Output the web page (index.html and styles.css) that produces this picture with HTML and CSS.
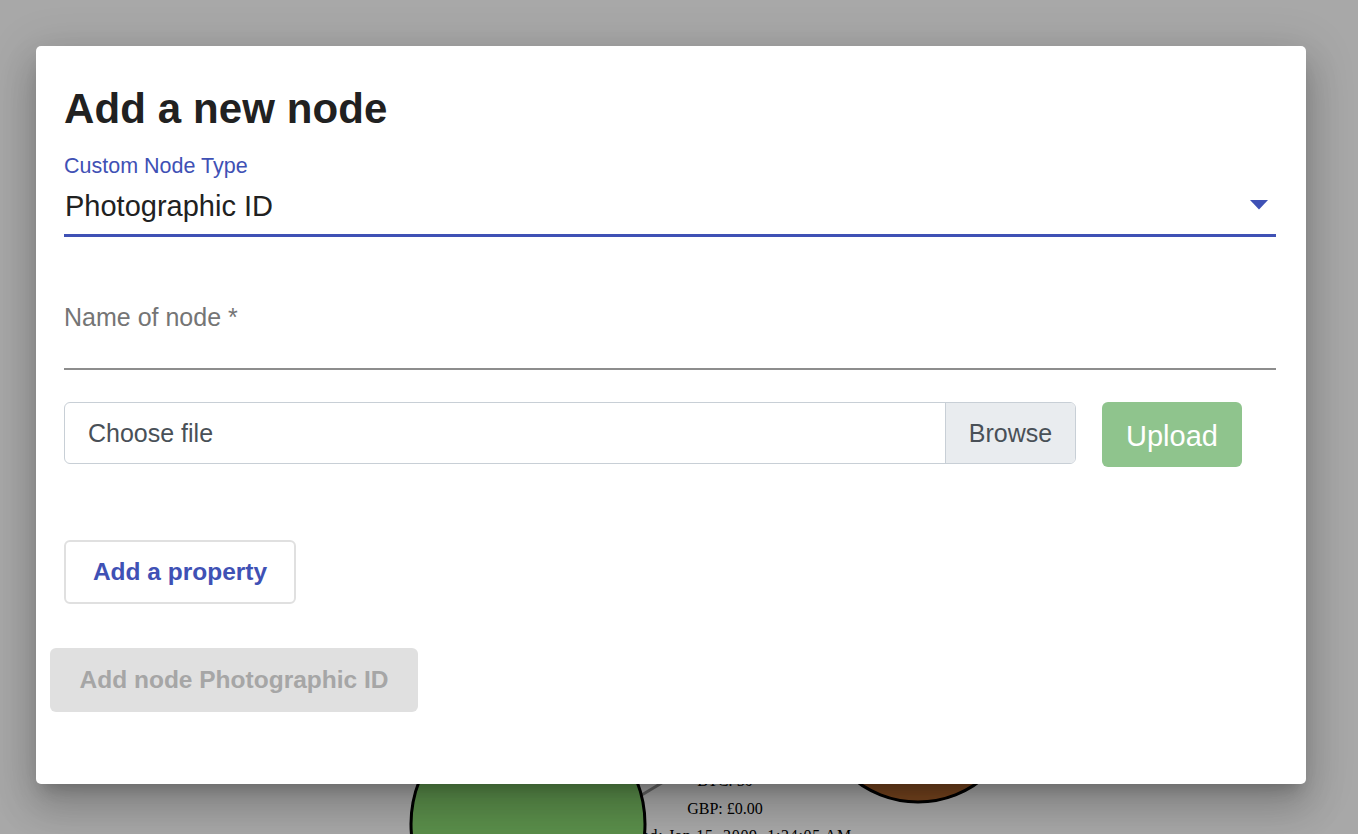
FILE: index.html
```html
<!DOCTYPE html>
<html lang="en">
<head>
<meta charset="utf-8">
<title>Add a new node</title>
<link rel="stylesheet" href="styles.css">
</head>
<body>
<div class="graph">
  <svg class="graph-svg" width="1358" height="834" viewBox="0 0 1358 834">
    <line x1="600" y1="820" x2="700" y2="760" stroke="#9a9a9a" stroke-width="3"/>
    <text x="725" y="786" class="gtext" text-anchor="middle">BTC: 50</text>
    <text x="725" y="814" class="gtext" text-anchor="middle">GBP: £0.00</text>
    <text x="852" y="841" class="gtext gtext-wide" text-anchor="end">Created: Jan 15, 2009, 1:24:05 AM</text>
    <circle cx="528" cy="824" r="117" fill="#8ada73" stroke="#000" stroke-width="3"/>
    <text x="528" y="848" class="gtext-white" text-anchor="middle">Block 0</text>
    <circle cx="918" cy="700" r="102" fill="#b5692f" stroke="#000" stroke-width="3"/>
  </svg>
</div>
<div class="backdrop"></div>
<div class="dialog-wrap">
  <div class="dialog">
    <h2 class="dialog-title">Add a new node</h2>
    <div class="field select-field">
      <label class="field-label label-focused">Custom Node Type</label>
      <div class="select-value">
        <span>Photographic ID</span>
        <svg class="select-arrow" width="18" height="10" viewBox="0 0 18 10"><path d="M0 0 L18 0 L9 9.5 Z" fill="#3f51b5"/></svg>
      </div>
    </div>
    <div class="field text-field">
      <label class="field-label label-rest">Name of node *</label>
    </div>
    <div class="file-row">
      <div class="file-input">
        <span class="file-text">Choose file</span>
        <span class="file-browse">Browse</span>
      </div>
      <button class="btn-upload">Upload</button>
    </div>
    <button class="btn-outline">Add a property</button>
    <button class="btn-disabled">Add node Photographic ID</button>
  </div>
</div>
</body>
</html>
```
FILE: styles.css
```css
html, body {
  margin: 0;
  padding: 0;
}
body {
  width: 1358px;
  height: 834px;
  overflow: hidden;
  background: #fff;
  font-family: "Liberation Sans", Arial, Helvetica, sans-serif;
  position: relative;
}
.graph {
  position: absolute;
  left: 0;
  top: 0;
}
.graph-svg {
  display: block;
}
.gtext {
  font-family: "Liberation Serif", "Times New Roman", serif;
  font-size: 16px;
  fill: #000;
}
.gtext-wide {
  letter-spacing: 0.7px;
}
.gtext-white {
  font-family: "Liberation Serif", "Times New Roman", serif;
  font-size: 22px;
  fill: #fff;
}
.backdrop {
  position: absolute;
  inset: 0;
  background: rgba(0, 0, 0, 0.34);
}
.dialog-wrap {
  position: absolute;
  left: 36px;
  top: 46px;
}
.dialog {
  width: 1270px;
  height: 738px;
  box-sizing: border-box;
  background: #fff;
  border-radius: 5px;
  padding: 42px 30px 0 28px;
  display: flex;
  flex-direction: column;
  align-items: flex-start;
  box-shadow: 0 11px 15px -7px rgba(0,0,0,0.2), 0 24px 38px 3px rgba(0,0,0,0.14), 0 9px 46px 8px rgba(0,0,0,0.12);
}
.dialog-title {
  margin: 0;
  font-size: 42px;
  line-height: 42px;
  font-weight: 700;
  color: #212121;
  letter-spacing: 0.1px;
}
.field {
  align-self: stretch;
  display: flex;
  flex-direction: column;
}
.field-label {
  display: block;
}
.select-field {
  margin-top: 25px;
}
.label-focused {
  font-size: 21.5px;
  line-height: 22px;
  color: #3f51b5;
}
.select-value {
  margin-top: 15px;
  display: flex;
  align-items: center;
  justify-content: space-between;
  font-size: 29px;
  line-height: 29px;
  color: #212121;
  padding: 0 8px 13px 1px;
  border-bottom: 3.5px solid #3f51b5;
}
.select-arrow {
  display: block;
  margin-top: -4px;
}
.text-field {
  margin-top: 68px;
  border-bottom: 2px solid #8d8d8d;
  padding-bottom: 38px;
}
.label-rest {
  font-size: 25px;
  line-height: 25px;
  color: #757575;
}
.file-row {
  margin-top: 32px;
  display: flex;
  align-items: flex-start;
  gap: 26px;
}
.file-input {
  width: 1012px;
  height: 62px;
  box-sizing: border-box;
  border: 1.5px solid #c8cfd6;
  border-radius: 6px;
  display: flex;
  overflow: hidden;
  font-size: 25px;
  color: #495057;
}
.file-text {
  flex: 1;
  display: flex;
  align-items: center;
  padding-left: 23px;
}
.file-browse {
  width: 130px;
  box-sizing: border-box;
  display: flex;
  align-items: center;
  justify-content: center;
  background: #e9ecef;
  border-left: 1.5px solid #c8cfd6;
}
.btn-upload {
  width: 140px;
  height: 65px;
  border: none;
  border-radius: 6px;
  background: #8fc48d;
  color: #fff;
  font-family: inherit;
  font-size: 29px;
  padding: 0;
  padding-top: 3px;
}
.btn-outline {
  margin-top: 73px;
  width: 232px;
  height: 64px;
  box-sizing: border-box;
  border: 2px solid #e0e0e0;
  border-radius: 6px;
  background: #fff;
  color: #3f51b5;
  font-family: inherit;
  font-weight: 700;
  font-size: 24.5px;
  padding: 0;
}
.btn-disabled {
  margin-top: 44px;
  margin-left: -14px;
  width: 368px;
  height: 64px;
  border: none;
  border-radius: 6px;
  background: #e0e0e0;
  color: #a6a6a6;
  font-family: inherit;
  font-weight: 700;
  font-size: 24.5px;
  padding: 0;
}
```
